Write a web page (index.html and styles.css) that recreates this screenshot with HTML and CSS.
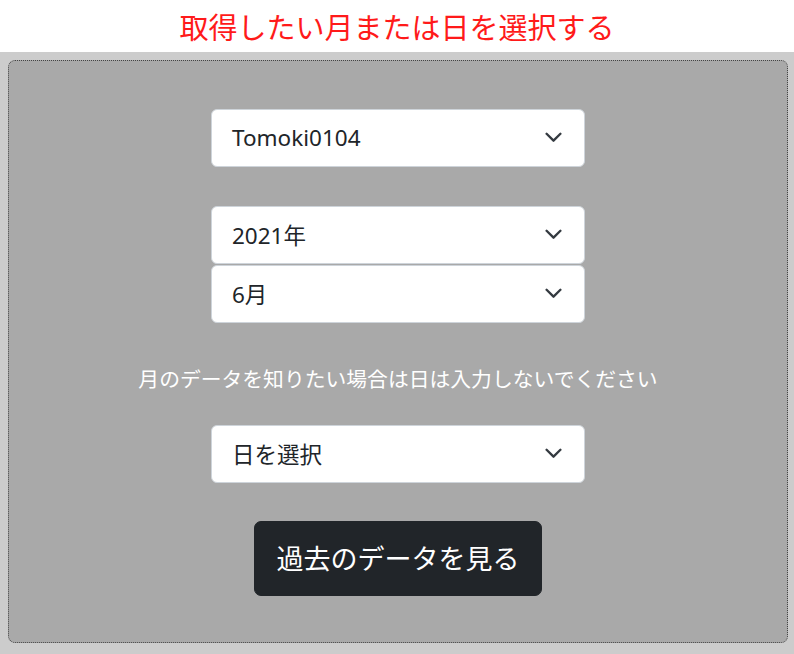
FILE: index.html
```html
<!DOCTYPE html>
<html lang="ja">
<head>
<meta charset="utf-8">
<link rel="stylesheet" href="styles.css">
</head>
<body>
<header class="title">取得したい月または日を選択する</header>
<main class="outer">
  <form class="panel">
    <div class="select first"><span>Tomoki0104</span><svg class="chev" viewBox="0 0 16 10"><path d="M1.5 1.5 8 8l6.5-6.5"/></svg></div>
    <div class="select second"><span>2021年</span><svg class="chev" viewBox="0 0 16 10"><path d="M1.5 1.5 8 8l6.5-6.5"/></svg></div>
    <div class="select third"><span>6月</span><svg class="chev" viewBox="0 0 16 10"><path d="M1.5 1.5 8 8l6.5-6.5"/></svg></div>
    <p class="note">月のデータを知りたい場合は日は入力しないでください</p>
    <div class="select day"><span>日を選択</span><svg class="chev" viewBox="0 0 16 10"><path d="M1.5 1.5 8 8l6.5-6.5"/></svg></div>
    <button type="button" class="btn">過去のデータを見る</button>
  </form>
</main>
</body>
</html>
```

FILE: styles.css
```css
html, body {
  margin: 0;
  padding: 0;
  background: #cccccc;
  font-family: "Noto Sans", "Noto Sans CJK JP", sans-serif;
}
.title {
  background: #ffffff;
  height: 52px;
  display: flex;
  align-items: center;
  justify-content: center;
  color: #ff1a1a;
  font-size: 29px;
  font-family: "Noto Sans CJK JP", sans-serif;
  font-weight: 400;
  padding-bottom: 1px;
  box-sizing: border-box;
}
.outer {
  padding: 8px 6px 11px 8px;
}
.panel {
  box-sizing: border-box;
  height: 583px;
  background: #a9a9a9;
  border: 1px dotted #444;
  border-radius: 7px;
  display: flex;
  flex-direction: column;
  align-items: center;
  padding-top: 48px;
  margin: 0;
}
.select {
  box-sizing: border-box;
  width: 374px;
  height: 58px;
  background: #ffffff;
  border: 1px solid #ced4da;
  border-radius: 6px;
  display: flex;
  align-items: center;
  justify-content: space-between;
  padding: 0 22px 0 20px;
  color: #212529;
  font-size: 22.5px;
  font-family: "Noto Sans", "Noto Sans CJK JP", sans-serif;
}
.select span { padding-bottom: 2px; }
.chev {
  width: 17px;
  height: 11px;
  fill: none;
  stroke: #343a40;
  stroke-width: 2.2;
  stroke-linecap: round;
  stroke-linejoin: round;
  margin-top: -2px;
}
.second { margin-top: 39px; }
.third { margin-top: 1px; }
.note {
  margin: 41px 0 0 0;
  color: #ffffff;
  font-size: 20.8px;
  line-height: 28px;
  font-family: "Noto Sans CJK JP", sans-serif;
}
.day { margin-top: 33px; }
.btn {
  margin-top: 38px;
  width: 288px;
  height: 75px;
  background: #212529;
  color: #ffffff;
  border: 1px solid #212529;
  border-radius: 7px;
  font-size: 27px;
  font-family: "Noto Sans CJK JP", sans-serif;
  padding: 0 0 3px 0;
}
```
